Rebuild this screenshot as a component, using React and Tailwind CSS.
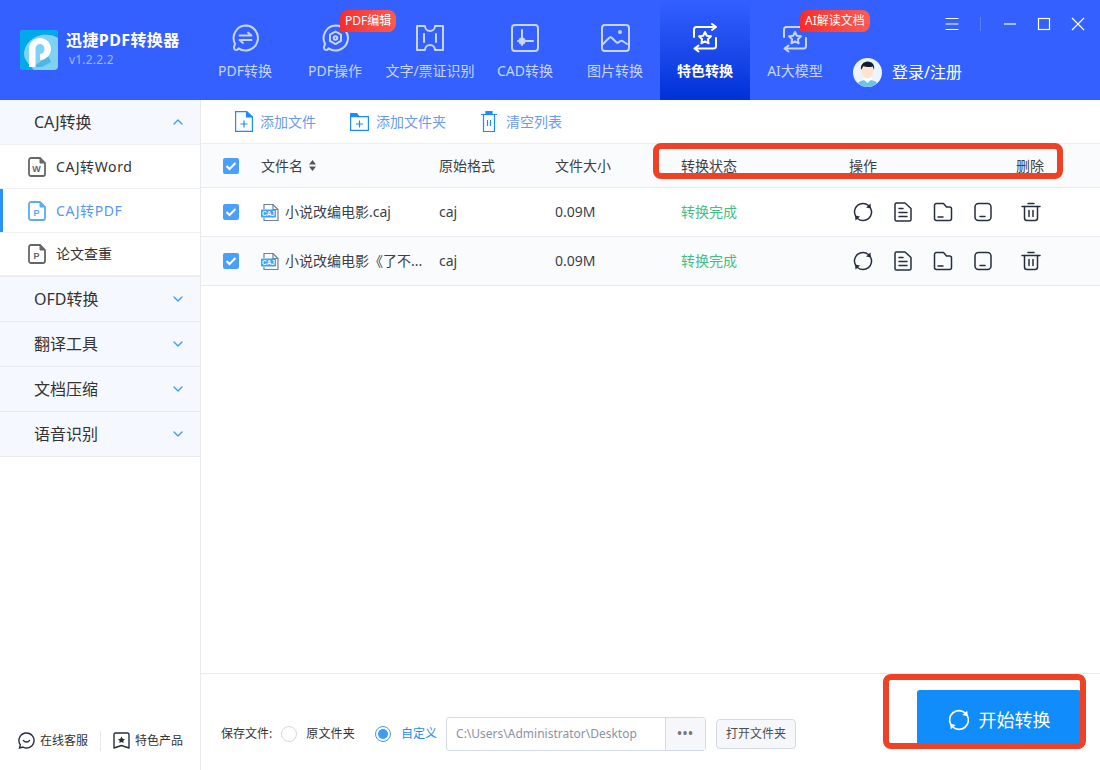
import { ChevronDown, ChevronUp } from 'lucide-react';

const navItems = [
  { label: 'PDF转换', w: 'w-[90px]', icon: 'bubbleSwap' },
  { label: 'PDF操作', w: 'w-[90px]', icon: 'bubbleGear', badge: 'PDF编辑' },
  { label: '文字/票证识别', w: 'w-[100px]', icon: 'ticket' },
  { label: 'CAD转换', w: 'w-[90px]', icon: 'cad' },
  { label: '图片转换', w: 'w-[90px]', icon: 'image' },
  { label: '特色转换', w: 'w-[90px]', icon: 'star', active: true },
  { label: 'AI大模型', w: 'w-[90px]', icon: 'star', badge: 'AI解读文档' },
];

function NavIcon({ name }) {
  const common = { width: 30, height: 30, viewBox: '0 0 30 30', fill: 'none', stroke: 'currentColor', strokeWidth: 2, strokeLinecap: 'round', strokeLinejoin: 'round' };
  if (name === 'bubbleSwap' || name === 'bubbleGear') {
    return (
      <svg {...common}>
        <path d="M15.500 2.500a12.500 12.500 0 1 1-7 22.900c-1 2.300-4.300 2-4.500-.4-.1-1.700.9-2.400.9-4.500A12.500 12.500 0 0 1 15.500 2.500z" />
        {name === 'bubbleSwap' ? (
          <g strokeWidth="1.800">
            <path d="M9.500 12.500h12l-3.500-3" />
            <path d="M21.500 17h-12l3.500 3" />
          </g>
        ) : (
          <g strokeWidth="2">
            <path d="M15.500 8.500l5.500 3.200v6.200l-5.500 3.200-5.500-3.200v-6.200z" />
            <circle cx="15.500" cy="15" r="1.800" />
          </g>
        )}
      </svg>
    );
  }
  if (name === 'ticket') {
    return (
      <svg {...common}>
        <path d="M2 3h8a5 5 0 0 0 10 0h8v24h-8a5 5 0 0 0-10 0H2z" />
        <path d="M9 11v8M21 11v8" />
      </svg>
    );
  }
  if (name === 'cad') {
    return (
      <svg {...common}>
        <rect x="2" y="2" width="26" height="26" rx="3" />
        <path d="M12 7v15M8 18h15" />
        <circle cx="12" cy="18" r="2.500" fill="currentColor" />
      </svg>
    );
  }
  if (name === 'image') {
    return (
      <svg {...common}>
        <rect x="2" y="2" width="27" height="26" rx="3" />
        <circle cx="20" cy="9" r="2" fill="currentColor" stroke="none" />
        <path d="M3 21l6-6c1-1 2-1 3 0l4 4c1 1 2 1 3 0 1-1 2-2 3.500-1l4.500 3" />
      </svg>
    );
  }
  return (
    <svg {...common}>
      <path d="M4 14V6.500C4 5 5 4 6.500 4H26l-4-3M26 4l-4 3" strokeWidth="2" />
      <path d="M26 15v8c0 1.500-1 2.500-2.500 2.500H4.500l4 3M4.500 25.500l4-3" strokeWidth="2" />
      <path d="M15 9l1.800 3.700 4.100.6-3 2.900.7 4.100-3.600-1.900-3.600 1.900.7-4.100-3-2.900 4.100-.6z" strokeWidth="2" />
    </svg>
  );
}

function Logo() {
  return (
    <svg width="38" height="40" viewBox="0 0 38 40">
      <rect width="38" height="40" rx="4" fill="#7fd2f4" />
      <path d="M0 36V4a4 4 0 0 1 4-4h30a4 4 0 0 1 4 4v4C24 0 5 8 4 24c-.3 5 6 12 10 16H4a4 4 0 0 1-4-4z" fill="#02a9e8" />
      <path d="M13 37L28 26l3 6-9 5z" fill="#2a9fd0" opacity=".55" />
      <path d="M9 37V19C9 12 14 8 20 8c6.500 0 11 5 11 11s-5 11-11 11v-6c2.800 0 4.500-2.300 4.500-5S22.800 14 20 14s-4.500 2-4.500 5v18z" fill="#fff" />
    </svg>
  );
}

function Avatar() {
  return (
    <svg width="29" height="29" viewBox="0 0 29 29">
      <defs>
        <clipPath id="av"><circle cx="14.500" cy="14.500" r="14.500" /></clipPath>
      </defs>
      <g clipPath="url(#av)">
        <rect width="29" height="29" fill="#eef4fb" />
        <path d="M3 29c1-6 6-7 11.500-7S25 23 26 29z" fill="#6fc3ea" />
        <path d="M10 21l4.500 4 4.500-4-1-3h-7z" fill="#fff" />
        <ellipse cx="14.500" cy="13" rx="6" ry="7.500" fill="#fde3d2" />
        <path d="M8 12c-.8-5 2.500-8.500 6.500-8.500 5 0 7.500 3.500 6.500 8.500l-1.200-3.500C17 9.500 12 9 10.500 8z" fill="#10202f" />
      </g>
    </svg>
  );
}

function FileTag({ letter, color }) {
  return (
    <svg width="18" height="20" viewBox="0 0 18 20" fill="none">
      <path d="M1 3a2 2 0 0 1 2-2h9l5 5v11a2 2 0 0 1-2 2H3a2 2 0 0 1-2-2z" stroke={color} strokeWidth="1.800" />
      <path d="M12 1v5h5z" fill={color} stroke={color} />
      <text x="8.500" y="15" textAnchor="middle" fontSize="9" fontWeight="700" fill={color} fontFamily="'Liberation Sans', sans-serif">{letter}</text>
    </svg>
  );
}

function CajIcon() {
  return (
    <svg width="18" height="19" viewBox="0 0 18 19" fill="none">
      <path d="M3 6V1.500h9l5 5v11H3V15" stroke="#6d8299" strokeWidth="1.200" />
      <path d="M12 1.500v5h5" stroke="#6d8299" strokeWidth="1.200" />
      <rect x="0" y="6.500" width="15" height="8" rx="1" fill="#38a4f5" />
      <text x="7.500" y="13" textAnchor="middle" fontSize="6.500" fontWeight="700" fill="#fff" fontFamily="'Liberation Sans', sans-serif">CAJ</text>
    </svg>
  );
}

function Checkbox() {
  return (
    <div className="w-4 h-4 rounded-[2px] bg-[#4a9ffb] flex items-center justify-center">
      <svg width="12" height="10" viewBox="0 0 12 10" fill="none">
        <path d="M1.500 5l3 3 6-6" stroke="#fff" strokeWidth="2" />
      </svg>
    </div>
  );
}

function RefreshIcon({ color, size = 20 }) {
  return (
    <svg width={size} height={size} viewBox="0 0 20 20" fill="none" stroke={color} strokeWidth="1.500" strokeLinecap="round">
      <path d="M2.600 14.200A8.500 8.500 0 0 1 15.500 3.500" />
      <path d="M17.400 5.800A8.500 8.500 0 0 1 4.500 16.500" />
      <path d="M17.500 1.500l.5 5-5-1z" fill={color} stroke="none" />
      <path d="M2.500 18.500l-.5-5 5 1z" fill={color} stroke="none" />
    </svg>
  );
}

function RowIcon({ name }) {
  const common = { width: 20, height: 20, viewBox: '0 0 20 20', fill: 'none', stroke: '#262f3f', strokeWidth: 1.500, strokeLinecap: 'round', strokeLinejoin: 'round' };
  if (name === 'refresh') return <RefreshIcon color="#262f3f" />;
  if (name === 'doc') {
    return (
      <svg {...common}>
        <path d="M2 2.500a1.500 1.500 0 0 1 1.500-1.500H12l6 5.500v11a1.500 1.500 0 0 1-1.500 1.500h-13A1.500 1.500 0 0 1 2 17.500z" />
        <path d="M6 6.500h4M6 10.500h8M6 14.500h8" />
      </svg>
    );
  }
  if (name === 'folder') {
    return (
      <svg {...common}>
        <path d="M1.500 3.500a2 2 0 0 1 2-2h7l3 3.500h3a2 2 0 0 1 2 2V16.500a2 2 0 0 1-2 2h-13a2 2 0 0 1-2-2z" />
        <path d="M5 15h5" />
      </svg>
    );
  }
  if (name === 'tablet') {
    return (
      <svg {...common}>
        <rect x="2" y="1.500" width="16" height="17" rx="3.500" />
        <path d="M7 14.500h5" />
      </svg>
    );
  }
  return (
    <svg {...common}>
      <path d="M1 4.500h18M7 1.500h6" />
      <path d="M3.500 4.500V16a2.500 2.500 0 0 0 2.500 2.500h8a2.500 2.500 0 0 0 2.500-2.500V4.500" />
      <path d="M8 8.500v6M12 8.500v6" />
    </svg>
  );
}

function FileRow({ name, striped }) {
  return (
    <div className={`grid grid-cols-[38px_178px_116px_126px_168px_167px_1fr] items-center pl-[22px] h-[49px] border-b border-[#e8eaed] text-sm text-[#3a3f4a] ${striped ? 'bg-[#fafbfc]' : 'bg-white'}`}>
      <Checkbox />
      <div className="flex items-center gap-[6px]">
        <CajIcon />
        <span className="whitespace-nowrap">{name}</span>
      </div>
      <span>caj</span>
      <span>0.09M</span>
      <span className="text-[#3fc087]">转换完成</span>
      <div className="flex items-center gap-5 ml-1">
        <RowIcon name="refresh" />
        <RowIcon name="doc" />
        <RowIcon name="folder" />
        <RowIcon name="tablet" />
      </div>
      <div className="ml-[5px]">
        <RowIcon name="trash" />
      </div>
    </div>
  );
}

export default function App() {
  return (
    <div className="relative w-[1100px] h-[770px] overflow-hidden bg-white flex flex-col font-['Noto_Sans','Noto_Sans_CJK_SC',sans-serif]">
      {/* Header */}
      <header className="relative h-[100px] shrink-0 bg-[#3360ff] flex">
        <div className="w-[200px] shrink-0 pl-5 flex items-center gap-2">
          <Logo />
          <div className="flex flex-col">
            <span className="text-base leading-5 font-bold tracking-[0.4px] text-white whitespace-nowrap">迅捷PDF转换器</span>
            <span className="pl-[3px] text-xs leading-5 tracking-[0.2px] text-[#a2b8ff]">v1.2.2.2</span>
          </div>
        </div>
        <nav className="flex">
          {navItems.map((item) => (
            <div
              key={item.label}
              className={`relative flex flex-col items-center pt-[23px] ${item.w} ${item.active ? 'bg-gradient-to-b from-[#3360ff] to-[#0030d8] text-white font-bold' : 'text-[#c8d6ff]'}`}
            >
              <NavIcon name={item.icon} />
              <span className="mt-[8px] text-sm leading-5 whitespace-nowrap">{item.label}</span>
              {item.badge && (
                <span className="absolute left-[50px] top-[10px] h-[22px] px-[5px] rounded-[8px] rounded-bl-none bg-gradient-to-r from-[#f52c2c] to-[#ff5a4f] text-white text-xs leading-[22px] whitespace-nowrap">
                  {item.badge}
                </span>
              )}
            </div>
          ))}
        </nav>
        <div className="flex items-center gap-[10px] ml-[13px] pt-[44px] h-[100px]">
          <Avatar />
          <span className="text-base text-white whitespace-nowrap">登录/注册</span>
        </div>
        {/* window controls sit above the login row */}
        <div className="absolute top-[17px] right-[15px] flex items-center text-white">
          <svg width="16" height="14" viewBox="0 0 16 14" stroke="currentColor" strokeWidth="1.200"><path d="M1.500 1.500h13M1.500 7h13M1.500 12.500h13" /></svg>
          <div className="w-px h-[14px] bg-[#5a80ff] ml-5 mr-[22px]" />
          <svg className="mr-5" width="14" height="14" viewBox="0 0 14 14" stroke="currentColor" strokeWidth="1.200"><path d="M1 7h12" /></svg>
          <svg className="mr-5" width="14" height="14" viewBox="0 0 14 14" fill="none" stroke="currentColor" strokeWidth="1.200"><rect x="1.500" y="1.500" width="11" height="11" /></svg>
          <svg width="14" height="14" viewBox="0 0 14 14" stroke="currentColor" strokeWidth="1.200"><path d="M1 1l12 12M13 1L1 13" /></svg>
        </div>
      </header>

      <div className="flex flex-1 min-h-0">
        {/* Sidebar */}
        <aside className="w-[201px] shrink-0 border-r border-[#e8eaed] flex flex-col">
          <div className="h-[44px] bg-[#f5f9ff] pl-[34px] pr-[14px] flex items-center justify-between text-base text-[#333]">
            <span>CAJ转换</span>
            <ChevronUp size={16} className="text-[#3f9cf5]" />
          </div>
          <div className="h-[45px] pl-[28px] flex items-center gap-[10px] border-y border-[#eef0f3] text-sm text-[#333]">
            <FileTag letter="W" color="#666" />
            <span className="tracking-[0.6px]">CAJ转Word</span>
          </div>
          <div className="relative h-[44px] pl-[28px] flex items-center gap-[10px] border-b border-[#eef0f3] text-sm text-[#5b96f5]">
            <div className="absolute left-0 top-0 bottom-0 w-[3px] bg-[#2a90fa]" />
            <FileTag letter="P" color="#5aaaf9" />
            <span className="tracking-[0.6px]">CAJ转PDF</span>
          </div>
          <div className="h-[44px] pl-[28px] flex items-center gap-[10px] border-b-2 border-[#eceef1] text-sm text-[#333]">
            <FileTag letter="P" color="#666" />
            <span>论文查重</span>
          </div>
          {['OFD转换', '翻译工具', '文档压缩', '语音识别'].map((g) => (
            <div key={g} className="h-[45px] bg-[#f5f9ff] border-b border-[#e8ebf0] pl-[34px] pr-[14px] flex items-center justify-between text-base text-[#333]">
              <span>{g}</span>
              <ChevronDown size={16} className="text-[#3f9cf5]" />
            </div>
          ))}
          <div className="mt-auto h-[60px] flex items-center pl-[18px] pt-[1px] text-xs text-[#333]">
            <svg width="17" height="17" viewBox="0 0 17 17" fill="none" stroke="#262f3f" strokeWidth="1.400" strokeLinecap="round">
              <path d="M8.500 1a7.500 7.500 0 1 1-3.500 14.100L1.500 16l.8-3.200A7.500 7.500 0 0 1 8.500 1z" />
              <path d="M5.500 8.500c1 2 5 2 6 0" />
            </svg>
            <span className="ml-[5px]">在线客服</span>
            <div className="w-px h-5 bg-[#e5e7eb] mx-[12px]" />
            <svg width="17" height="17" viewBox="0 0 17 17" fill="none" stroke="#262f3f" strokeWidth="1.400" strokeLinejoin="round">
              <path d="M1 2.500A1.500 1.500 0 0 1 2.500 1h12A1.500 1.500 0 0 1 16 2.500V16l-7.500-2.500L1 16z" />
              <path d="M8.500 4.500l1.200 2.300 2.300.4-1.700 1.600.4 2.300-2.200-1.100-2.200 1.100.4-2.300L5 7.200l2.300-.4z" fill="#262f3f" stroke="none" />
            </svg>
            <span className="ml-[5px]">特色产品</span>
          </div>
        </aside>

        {/* Main */}
        <main className="flex-1 min-w-0 flex flex-col">
          <div className="h-[44px] shrink-0 flex items-center text-sm text-[#6a9bf4] border-b border-[#eceef1] pl-[34px]">
            <svg width="18" height="21" viewBox="0 0 18 21" fill="none" stroke="#1a8cff" strokeWidth="1.200">
              <path d="M.6.600h11l5.800 5.400v14.400H.6z" />
              <path d="M11.500.600L17.400 6h-5.900z" fill="#1a8cff" />
              <path d="M5.500 13h7M9 9.500v7" />
            </svg>
            <span className="ml-[7px]">添加文件</span>
            <svg className="ml-[34px]" width="19" height="18" viewBox="0 0 19 18" fill="none" stroke="#1a8cff" strokeWidth="1.200">
              <path d="M.6.600h6l2 3h9.800v13.800H.6z" />
              <path d="M.6.600h6l2 3H.6z" fill="#1a8cff" />
              <path d="M6 11h7M9.500 7.500v7" />
            </svg>
            <span className="ml-[7px]">添加文件夹</span>
            <svg className="ml-[35px]" width="16" height="21" viewBox="0 0 16 21" fill="none" stroke="#1a8cff" strokeWidth="1.200">
              <path d="M0 3.500h16M2.500 3.500v17h11v-17" />
              <rect x="5" y="0.500" width="6" height="3" fill="#1a8cff" />
              <path d="M6.500 9v6M9.500 9v6" />
            </svg>
            <span className="ml-[9px]">清空列表</span>
          </div>

          <div className="grid grid-cols-[38px_178px_116px_126px_168px_167px_1fr] items-center pl-[22px] h-[44px] shrink-0 bg-[#fafbfc] border-b border-[#e8eaed] text-sm text-[#3a3f4a]">
            <Checkbox />
            <div className="flex items-center gap-[6px]">
              <span>文件名</span>
              <svg width="7" height="11" viewBox="0 0 7 11" fill="#555"><path d="M3.500 0L7 4.500H0zM3.500 11L0 6.500h7z" /></svg>
            </div>
            <span>原始格式</span>
            <span>文件大小</span>
            <span>转换状态</span>
            <span>操作</span>
            <span>删除</span>
          </div>

          <FileRow name="小说改编电影.caj" />
          <FileRow name="小说改编电影《了不..." striped />

          <div className="mt-auto h-[97px] shrink-0 border-t border-[#e8eaed] flex pl-5 pr-[19px] justify-between">
            <div className="flex items-center pt-[24px] text-xs text-[#333]">
              <span>保存文件:</span>
              <div className="ml-[9px] w-4 h-4 rounded-full border border-[#d4d8de]" />
              <span className="ml-[9px] tracking-[0.2px]">原文件夹</span>
              <div className="ml-5 w-4 h-4 rounded-full border border-[#3f9cf5] flex items-center justify-center">
                <div className="w-[10px] h-[10px] rounded-full bg-[#3f9cf5]" />
              </div>
              <span className="ml-[10px] text-[#1a8cff]">自定义</span>
              <div className="ml-[9px] w-[260px] h-[34px] flex border border-[#d3dae6] rounded-[3px] text-[#8b93a3]">
                <div className="flex-1 flex items-center pl-[9px] whitespace-nowrap">C:\Users\Administrator\Desktop</div>
                <div className="w-10 bg-[#f5f7fa] border-l border-[#d3dae6] flex items-center justify-center text-[#777] tracking-[1px] font-bold">•••</div>
              </div>
              <div className="ml-[10px] w-20 h-[30px] flex items-center justify-center bg-[#f5f7fa] border border-[#d3dae6] rounded-[4px] text-[#4a4f58]">打开文件夹</div>
            </div>
            <div className="mt-4 w-[164px] h-[59px] rounded-[3px] bg-[#118dfb] text-white text-lg flex items-center justify-center gap-[9px]">
              <RefreshIcon color="#fff" size={22} />
              <span>开始转换</span>
            </div>
          </div>
        </main>
      </div>

      {/* red annotation boxes */}
      <div className="absolute left-[653px] top-[143px] w-[410px] h-[36px] border-[6px] border-[#ee4125] rounded-[8px]" />
      <div className="absolute left-[883px] top-[674px] w-[203px] h-[75px] border-[6px] border-[#ee4125] rounded-[8px]" />
    </div>
  );
}
